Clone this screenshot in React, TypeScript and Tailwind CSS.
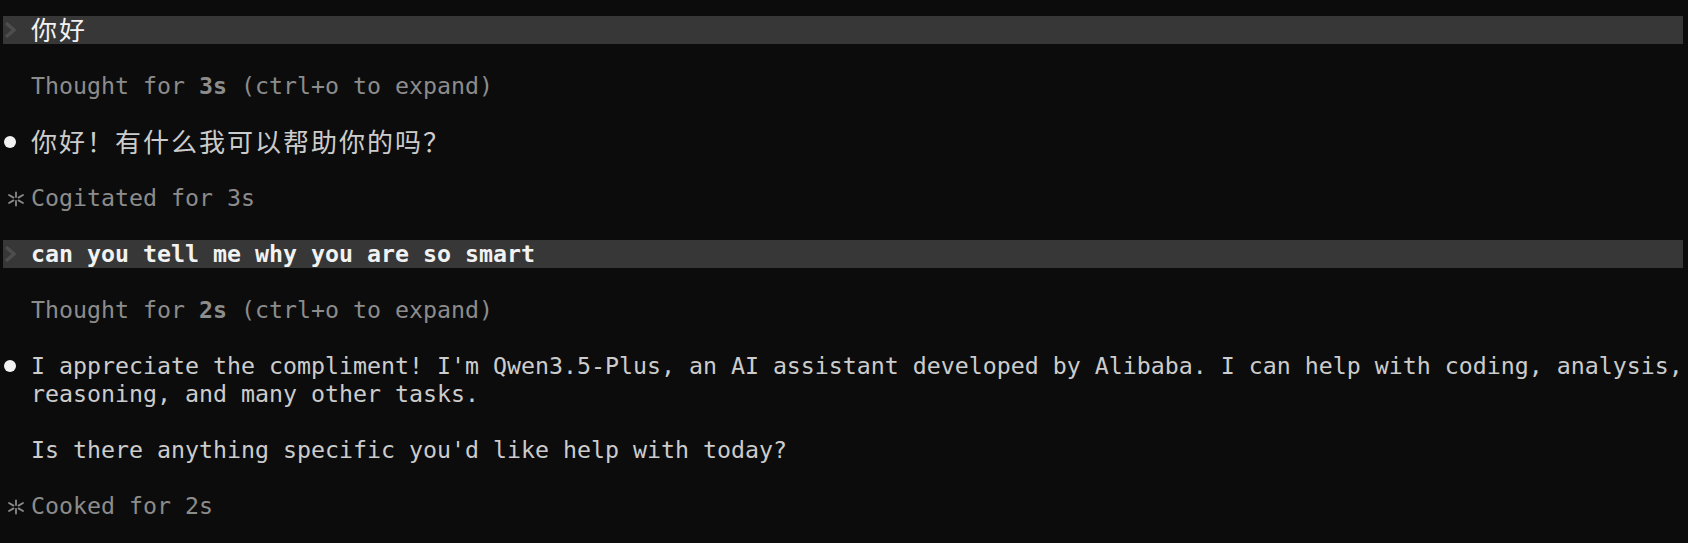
import React from "react";

const mono = { fontFamily: '"DejaVu Sans Mono", "Noto Sans CJK SC", monospace' };

function Cjk({ children }: { children: React.ReactNode }) {
  return (
    <span
      className="text-[26px] leading-none tracking-[2px]"
      style={{ fontFamily: '"Noto Sans CJK SC", sans-serif' }}
    >
      {children}
    </span>
  );
}

function Chevron() {
  return (
    <svg width="16" height="18" viewBox="0 0 16 18">
      <polyline points="3,2 11,9 3,16" fill="none" stroke="#4d4d4d" strokeWidth="3.5" strokeLinejoin="miter" />
    </svg>
  );
}

function Star() {
  return (
    <svg width="18" height="16" viewBox="0 0 18 16" className="ml-[4px] mt-[1px]">
      <g stroke="#8a8a8a" strokeWidth="1.8" strokeLinecap="round" fill="none">
        <line x1="9" y1="1.5" x2="9" y2="6" />
        <line x1="9" y1="10" x2="9" y2="14.5" />
        <line x1="2" y1="4" x2="6.5" y2="6.6" />
        <line x1="11.5" y1="9.4" x2="16" y2="12" />
        <line x1="16" y1="4" x2="11.5" y2="6.6" />
        <line x1="6.5" y1="9.4" x2="2" y2="12" />
      </g>
    </svg>
  );
}

function Dot() {
  return <div className="w-[12px] h-[12px] rounded-full bg-[#f2f2f2] ml-[1px]" />;
}

function Row({
  gutter,
  bar,
  children,
}: {
  gutter?: React.ReactNode;
  bar?: boolean;
  children?: React.ReactNode;
}) {
  return (
    <div className={`flex h-[28px] w-[1680px] ${bar ? "bg-[#373737]" : ""}`}>
      <div className="w-[28px] h-[28px] flex items-center shrink-0">{gutter}</div>
      <div className="h-[28px] leading-[28px] whitespace-pre">{children}</div>
    </div>
  );
}

export default function App() {
  return (
    <div className="w-[1688px] h-[543px] bg-[#0c0c0c] pt-[16px] pl-[3px] overflow-hidden text-[23.25px]" style={mono}>
      <Row bar gutter={<Chevron />}>
        <span className="text-[#f2f2f2]">
          <Cjk>你好</Cjk>
        </span>
      </Row>
      <Row />
      <Row>
        <span className="text-[#8c8c8c]">
          Thought for <span className="font-bold">3s</span> (ctrl+o to expand)
        </span>
      </Row>
      <Row />
      <Row gutter={<Dot />}>
        <span className="text-[#cccccc]">
          <Cjk>你好！有什么我可以帮助你的吗？</Cjk>
        </span>
      </Row>
      <Row />
      <Row gutter={<Star />}>
        <span className="text-[#8c8c8c]">Cogitated for 3s</span>
      </Row>
      <Row />
      <Row bar gutter={<Chevron />}>
        <span className="text-[#f2f2f2] font-bold">can you tell me why you are so smart</span>
      </Row>
      <Row />
      <Row>
        <span className="text-[#8c8c8c]">
          Thought for <span className="font-bold">2s</span> (ctrl+o to expand)
        </span>
      </Row>
      <Row />
      <Row gutter={<Dot />}>
        <span className="text-[#cccccc]">
          I appreciate the compliment! I'm Qwen3.5-Plus, an AI assistant developed by Alibaba. I can help with coding, analysis,
        </span>
      </Row>
      <Row>
        <span className="text-[#cccccc]">reasoning, and many other tasks.</span>
      </Row>
      <Row />
      <Row>
        <span className="text-[#cccccc]">Is there anything specific you'd like help with today?</span>
      </Row>
      <Row />
      <Row gutter={<Star />}>
        <span className="text-[#8c8c8c]">Cooked for 2s</span>
      </Row>
    </div>
  );
}
